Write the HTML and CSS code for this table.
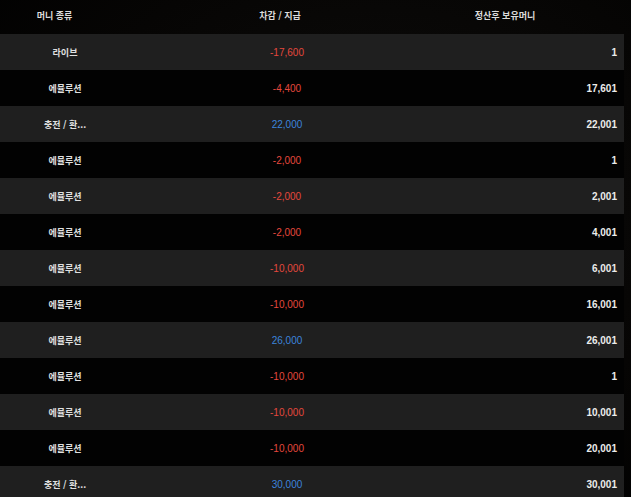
FILE: index.html
```html
<!DOCTYPE html>
<html lang="ko">
<head>
<meta charset="utf-8">
<link rel="stylesheet" href="styles.css">
</head>
<body>
<div class="table">
  <div class="head">
    <div class="h h1">머니 종류</div>
    <div class="h h2">차감 / 지급</div>
    <div class="h h3">정산후 보유머니</div>
  </div>
  <div class="rows">
    <div class="row"><div class="c1">라이브</div><div class="c2 minus">-17,600</div><div class="c3">1</div></div>
    <div class="row"><div class="c1">에뮬루션</div><div class="c2 minus">-4,400</div><div class="c3">17,601</div></div>
    <div class="row"><div class="c1">충전 / 환...</div><div class="c2 plus">22,000</div><div class="c3">22,001</div></div>
    <div class="row"><div class="c1">에뮬루션</div><div class="c2 minus">-2,000</div><div class="c3">1</div></div>
    <div class="row"><div class="c1">에뮬루션</div><div class="c2 minus">-2,000</div><div class="c3">2,001</div></div>
    <div class="row"><div class="c1">에뮬루션</div><div class="c2 minus">-2,000</div><div class="c3">4,001</div></div>
    <div class="row"><div class="c1">에뮬루션</div><div class="c2 minus">-10,000</div><div class="c3">6,001</div></div>
    <div class="row"><div class="c1">에뮬루션</div><div class="c2 minus">-10,000</div><div class="c3">16,001</div></div>
    <div class="row"><div class="c1">에뮬루션</div><div class="c2 plus">26,000</div><div class="c3">26,001</div></div>
    <div class="row"><div class="c1">에뮬루션</div><div class="c2 minus">-10,000</div><div class="c3">1</div></div>
    <div class="row"><div class="c1">에뮬루션</div><div class="c2 minus">-10,000</div><div class="c3">10,001</div></div>
    <div class="row"><div class="c1">에뮬루션</div><div class="c2 minus">-10,000</div><div class="c3">20,001</div></div>
    <div class="row"><div class="c1">충전 / 환...</div><div class="c2 plus">30,000</div><div class="c3">30,001</div></div>
  </div>
</div>
</body>
</html>
```
FILE: styles.css
```css
html, body {
  margin: 0;
  padding: 0;
  height: 100%;
  overflow: hidden;
}
body {
  background: radial-gradient(ellipse at 60% 40%, #0e0d0c 0%, #060504 60%, #000 100%);
  font-family: "Liberation Sans", Arial, "Noto Sans CJK KR", sans-serif;
  color: #e4e4e4;
}
.table {
  width: 624px;
}
.head {
  display: grid;
  grid-template-columns: 109px 342px 108px 1fr;
  height: 34px;
  align-items: center;
}
.h {
  text-align: center;
  font-family: "Noto Sans CJK KR", sans-serif;
  font-size: 9px;
  font-weight: 700;
  color: #dcdcdc;
  padding-bottom: 4px;
}
.row {
  display: grid;
  grid-template-columns: 130px 314px 1fr;
  height: 36px;
  align-items: center;
  background: #020202;
}
.row:nth-child(odd) {
  background: #1f1f1f;
}
.c1 {
  text-align: center;
  font-family: "Noto Sans CJK KR", sans-serif;
  font-size: 9px;
  font-weight: 700;
  color: #e0e0e0;
}
.c2 {
  text-align: center;
  font-size: 10px;
}
.minus { color: #e4483d; }
.plus { color: #3c84dc; }
.c3 {
  text-align: right;
  padding-right: 7px;
  font-size: 10px;
  font-weight: 700;
  color: #ececec;
}
```
